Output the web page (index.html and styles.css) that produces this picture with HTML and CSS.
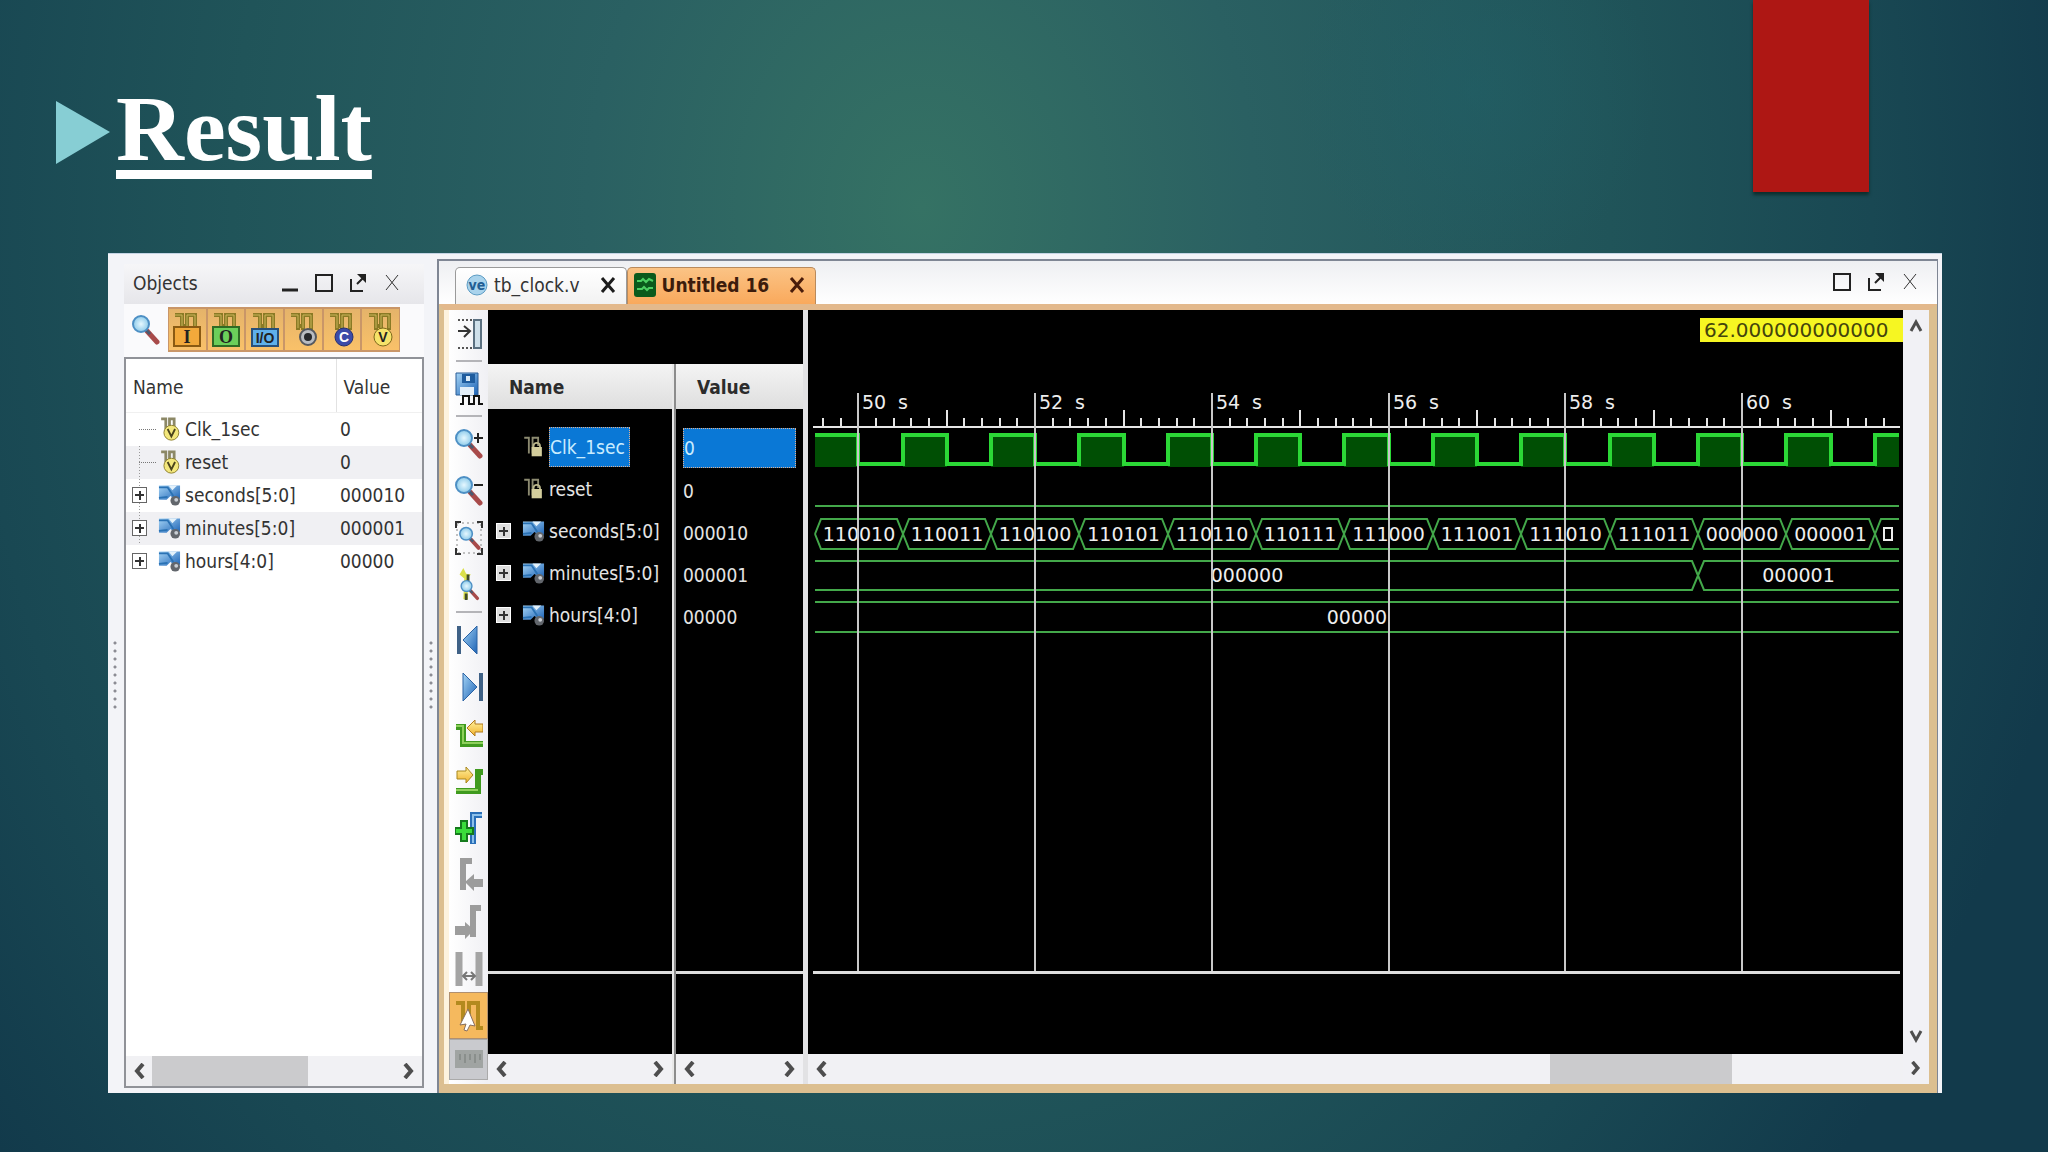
FILE: index.html
```html
<!DOCTYPE html>
<html lang="en">
<head>
	<meta charset="utf-8">
	<title>Result</title>
	<link rel="stylesheet" href="styles.css">
</head>
<body>
	<!-- shared icons -->
	<svg class="defs" width="0" height="0" aria-hidden="true">
		<defs>
			<linearGradient id="blue" x1="0" y1="0" x2="1" y2="1"><stop offset="0" stop-color="#a5d4f5"/><stop offset="1" stop-color="#1c62b5"/></linearGradient>
			<radialGradient id="glass"><stop offset="0" stop-color="#e6f8ff"/><stop offset="1" stop-color="#8ecbea"/></radialGradient>
			<linearGradient id="gold" x1="0" y1="0" x2="0" y2="1"><stop offset="0" stop-color="#fff2a0"/><stop offset="1" stop-color="#f0b12c"/></linearGradient>
		</defs>
		<symbol id="i-lens" viewBox="0 0 28 32">
			<path d="M15 17l10 11" stroke="#a84a4a" stroke-width="5" stroke-linecap="round"/>
			<path d="M14 16l4 4" stroke="#4a5a70" stroke-width="3"/>
			<circle cx="9" cy="10" r="8" fill="url(#glass)" stroke="#4d8fc4" stroke-width="2"/>
		</symbol>
		<symbol id="i-pulse" viewBox="0 0 28 36">
			<path d="M2 3h7v15M9 14h4M14 18V3h8v15" fill="none" stroke="#8a7a25" stroke-width="4"/>
			<path d="M2 3h7v13M14 16V3h8v13" fill="none" stroke="#c9b55a" stroke-width="1"/>
		</symbol>
		<symbol id="i-sigv" viewBox="0 0 24 28">
			<path d="M3 3h5v11M12 12V3h5v9" fill="none" stroke="#8c8866" stroke-width="3"/>
			<circle cx="14" cy="18" r="8" fill="#f3e77c" stroke="#8a7c2c" stroke-width="1"/>
			<path d="M10 14l4 8 4-8" fill="none" stroke="#4a431c" stroke-width="2"/>
		</symbol>
		<symbol id="i-bus" viewBox="0 0 24 24">
			<path d="M1 2h22v14h-6l-4-3-4 4H1z" fill="url(#blue)"/>
			<path d="M11 2l4 5 5-5z" fill="#e4f2fb"/>
			<path d="M1 4h9l6 9M1 15l9-1" fill="none" stroke="#2a72b4" stroke-width="2"/>
			<circle cx="18" cy="18" r="5" fill="#62666c"/>
			<circle cx="19" cy="17" r="2" fill="#c9ced4"/>
		</symbol>
		<symbol id="i-lock" viewBox="0 0 24 28">
			<path d="M2 4h5v17M11 21V4h6v9" fill="none" stroke="#8c8a70" stroke-width="2"/>
			<path d="M12 15v-2a3 3 0 0 1 7 0v2" fill="none" stroke="#b9b58a" stroke-width="2"/>
			<rect x="10" y="14" width="11" height="10" fill="#d3cd9c"/>
		</symbol>
		<symbol id="i-left" viewBox="0 0 12 16"><path d="M10 1L4 8l6 7" fill="none" stroke="#4e4e4e" stroke-width="4"/></symbol>
		<symbol id="i-right" viewBox="0 0 12 16"><path d="M2 1l6 7-6 7" fill="none" stroke="#4e4e4e" stroke-width="4"/></symbol>
		<symbol id="i-max" viewBox="0 0 20 20"><rect x="2" y="2" width="16" height="16" fill="none" stroke="#222" stroke-width="2"/></symbol>
		<symbol id="i-float" viewBox="0 0 20 20"><path d="M3 6v12h12M9 11l6-6" fill="none" stroke="#222" stroke-width="2"/><path d="M9 1h9v9z" fill="#222"/></symbol>
		<symbol id="i-close" viewBox="0 0 20 20"><path d="M4 2l12 15M16 2L4 17" stroke="#333" stroke-width="1"/></symbol>
	</svg>

	<main class="slide">
		<header class="slide-head">
			<div class="title">
				<svg class="bullet" viewBox="0 0 54 63"><path d="M0 0l54 31L0 63z" fill="#87ced4"/></svg>
				<h1>Result</h1>
			</div>
			<div class="ribbon"></div>
		</header>

		<section class="app">
			<div class="splitter"></div>

			<!-- objects panel -->
			<aside class="objects">
				<div class="panel-title">
					<h2>Objects</h2>
					<button aria-label="Minimize"><svg viewBox="0 0 20 20"><path d="M2 17h16" stroke="#222" stroke-width="3"/></svg></button>
					<button aria-label="Maximize"><svg><use href="#i-max"/></svg></button>
					<button aria-label="Float"><svg><use href="#i-float"/></svg></button>
					<button aria-label="Close"><svg><use href="#i-close"/></svg></button>
				</div>
				<div class="filters">
					<button class="find" aria-label="Search"><svg><use href="#i-lens"/></svg></button>
					<button class="on"><svg viewBox="0 0 28 36"><use href="#i-pulse"/><rect x="1" y="15" width="26" height="19" fill="#f2a93b" stroke="#8a5a12" stroke-width="2"/><text x="14" y="31">I</text></svg></button>
					<button class="on"><svg viewBox="0 0 28 36"><use href="#i-pulse"/><rect x="1" y="15" width="26" height="19" fill="#6ccf5a" stroke="#2f6b25" stroke-width="2"/><text x="14" y="31">O</text></svg></button>
					<button class="on"><svg viewBox="0 0 28 36"><use href="#i-pulse"/><rect x="1" y="17" width="26" height="17" fill="#5fb0ea" stroke="#28507a" stroke-width="2"/><text class="small" x="14" y="31">I/O</text></svg></button>
					<button class="on"><svg viewBox="0 0 28 36"><use href="#i-pulse"/><circle cx="19" cy="25" r="8" fill="#b9bcc2" stroke="#55585f" stroke-width="2"/><circle cx="19" cy="25" r="4" fill="#26282c"/></svg></button>
					<button class="on"><svg viewBox="0 0 28 36"><use href="#i-pulse"/><circle cx="16" cy="25" r="9" fill="#3b4aa8" stroke="#262f70"/><text class="small light" x="16" y="30">C</text></svg></button>
					<button class="on"><svg viewBox="0 0 28 36"><use href="#i-pulse"/><circle cx="16" cy="25" r="9" fill="#f6e36a" stroke="#7d6a1c"/><text class="small" x="16" y="30">V</text></svg></button>
				</div>
				<div class="object-list">
					<table>
						<thead>
							<tr><th>Name</th><th>Value</th></tr>
						</thead>
						<tbody>
							<tr><td><div class="cell"><i class="twig"></i><svg class="ico"><use href="#i-sigv"/></svg>Clk_1sec</div></td><td>0</td></tr>
							<tr><td><div class="cell"><i class="twig"></i><svg class="ico"><use href="#i-sigv"/></svg>reset</div></td><td>0</td></tr>
							<tr><td><div class="cell"><button class="plus" aria-label="Expand"></button><svg class="ico"><use href="#i-bus"/></svg>seconds[5:0]</div></td><td>000010</td></tr>
							<tr><td><div class="cell"><button class="plus" aria-label="Expand"></button><svg class="ico"><use href="#i-bus"/></svg>minutes[5:0]</div></td><td>000001</td></tr>
							<tr><td><div class="cell"><button class="plus" aria-label="Expand"></button><svg class="ico"><use href="#i-bus"/></svg>hours[4:0]</div></td><td>00000</td></tr>
						</tbody>
					</table>
					<div class="hscroll">
						<button aria-label="Scroll left"><svg><use href="#i-left"/></svg></button>
						<div class="track"><div class="thumb"></div></div>
						<button aria-label="Scroll right"><svg><use href="#i-right"/></svg></button>
					</div>
				</div>
			</aside>

			<div class="splitter"></div>

			<!-- wave window -->
			<section class="editor">
				<nav class="tabs">
					<button class="tab">
						<svg viewBox="0 0 22 24"><circle cx="11" cy="12" r="10" fill="#a9d3ec" stroke="#5c9cc4"/><text x="11" y="17">ve</text></svg>
						tb_clock.v
						<svg class="x" viewBox="0 0 16 18"><path d="M2 2l12 14M14 2L2 16" stroke="#1c1c1c" stroke-width="3"/></svg>
					</button>
					<button class="tab active">
						<svg viewBox="0 0 22 24"><rect width="22" height="24" rx="3" fill="#0b5a1c"/><path d="M3 8h4l2-2 3 3 3-3 4 2M3 16h5l2-2 3 3 2-2h4" fill="none" stroke="#4ccf62" stroke-width="2"/></svg>
						Untitled 16
						<svg class="x" viewBox="0 0 16 18"><path d="M2 2l12 14M14 2L2 16" stroke="#4a1c0a" stroke-width="3"/></svg>
					</button>
					<div class="win-buttons">
						<button aria-label="Maximize"><svg><use href="#i-max"/></svg></button>
						<button aria-label="Float"><svg><use href="#i-float"/></svg></button>
						<button aria-label="Close"><svg><use href="#i-close"/></svg></button>
					</div>
				</nav>

				<div class="workspace">
					<div class="tools">
						<button aria-label="Dock"><svg viewBox="0 0 28 32"><path d="M3 2h14M3 30h14" stroke="#555" stroke-width="2" stroke-dasharray="2 2"/><path d="M3 13h11M9 8l6 5-6 6" fill="none" stroke="#333" stroke-width="2"/><rect x="19" y="2" width="7" height="28" fill="#cfe0ea" stroke="#5b7080" stroke-width="2"/></svg></button>
						<hr>
						<button aria-label="Save"><svg viewBox="0 0 28 34"><path d="M1 1h22v22H1z" fill="url(#blue)" stroke="#2a5d96"/><rect x="7" y="2" width="13" height="9" fill="#1f5c9e"/><rect x="11" y="4" width="4" height="5" fill="#dcecf8"/><rect x="5" y="15" width="14" height="8" fill="#e3eef8"/><path d="M5 32h3v-8h6v8h5v-8h5v8h4" fill="none" stroke="#111" stroke-width="2"/></svg></button>
						<hr>
						<button aria-label="Zoom in"><svg viewBox="0 0 28 32"><use href="#i-lens" width="28" height="32"/><path d="M19 10h9M23 5v10" stroke="#222" stroke-width="2"/></svg></button>
						<button aria-label="Zoom out"><svg viewBox="0 0 28 32"><use href="#i-lens" width="28" height="32"/><path d="M19 10h9" stroke="#222" stroke-width="2"/></svg></button>
						<button aria-label="Zoom fit"><svg viewBox="0 0 28 34"><rect x="2" y="2" width="24" height="30" fill="none" stroke="#888" stroke-dasharray="2 3"/><use href="#i-lens" x="4" y="5" width="22" height="25"/><path d="M1 7V1h5M22 1h5v6M27 27v6h-5M6 33H1v-6" fill="none" stroke="#333" stroke-width="2"/></svg></button>
						<button aria-label="Zoom to cursor"><svg viewBox="0 0 28 36"><path d="M8 0l3 6 5 1-4 4 1 22H8L9 11 4 7z" fill="#dbe04a"/><path d="M13 7v8M11 27v7" stroke="#3f4a2c" stroke-width="3"/><use href="#i-lens" x="4" y="12" width="22" height="23"/></svg></button>
						<hr>
						<button aria-label="Go to start"><svg viewBox="0 0 28 32"><path d="M22 2v28L8 16z" fill="url(#blue)" stroke="#2a62a4"/><path d="M4 2v28" stroke="#3f6186" stroke-width="4"/></svg></button>
						<button aria-label="Go to end"><svg viewBox="0 0 28 32"><path d="M8 2v28l14-14z" fill="url(#blue)" stroke="#2a62a4"/><path d="M26 2v28" stroke="#3f6186" stroke-width="4"/></svg></button>
						<button aria-label="Previous transition"><svg viewBox="0 0 28 32"><path d="M1 9h7v17h20" fill="none" stroke="#3f9a1f" stroke-width="6"/><path d="M1 8h7v17h20" fill="none" stroke="#8ed05c" stroke-width="2"/><path d="M12 10l8-8v4h8v8h-8v4z" fill="url(#gold)" stroke="#b0791c"/></svg></button>
						<button aria-label="Next transition"><svg viewBox="0 0 28 32"><path d="M1 26h22V7h5" fill="none" stroke="#3f9a1f" stroke-width="6"/><path d="M1 25h22" stroke="#8ed05c" stroke-width="2"/><path d="M18 10l-7-8v4H2v8h9v4z" fill="url(#gold)" stroke="#a8861c"/></svg></button>
						<button aria-label="Add marker"><svg viewBox="0 0 28 34"><path d="M18 33V4h9" fill="none" stroke="#2a6fb8" stroke-width="6"/><path d="M18 32V4h9" fill="none" stroke="#8cc0ea" stroke-width="2"/><path d="M6 10h6v7h6v6h-6v7H6v-7H0v-6h6z" fill="#3bdc3b" stroke="#157a1c" stroke-width="2"/></svg></button>
						<button aria-label="Previous marker" disabled><svg viewBox="0 0 28 34"><path d="M17 3H8v29" fill="none" stroke="#9c9c9c" stroke-width="6"/><path d="M10 24l9-8v5h9v8h-9v4z" fill="#9c9c9c"/></svg></button>
						<button aria-label="Next marker" disabled><svg viewBox="0 0 28 34"><path d="M26 3h-8v29" fill="none" stroke="#9c9c9c" stroke-width="6"/><path d="M19 25l-9-8v4H0v9h10v4z" fill="#9c9c9c"/></svg></button>
						<button aria-label="Swap markers" disabled><svg viewBox="0 0 28 34"><path d="M4 0v34M24 0v34" stroke="#a4a4a4" stroke-width="7"/><path d="M8 24h12M12 20l-4 4 4 4M16 20l4 4-4 4" fill="none" stroke="#777" stroke-width="2"/></svg></button>
						<button class="on" aria-label="Snap to transition"><svg viewBox="0 0 28 34"><path d="M1 4h7v22M14 26V4h9v25h5" fill="none" stroke="#b38a1e" stroke-width="4"/><path d="M13 10l7 17-5-1-3 6-3-1 2-6-6 1z" fill="#fff" stroke="#8a7060"/></svg></button>
						<button class="last" aria-label="Floating ruler" disabled><svg viewBox="0 0 28 20"><rect width="28" height="18" fill="#a0a4a2"/><path d="M5 4v6M10 4v9M15 4v6M20 4v9M25 4v6" stroke="#8a8f8c" stroke-width="2"/></svg></button>
					</div>

					<div class="signals">
						<div class="signal-body">
							<table>
								<thead>
									<tr><th>Name</th><th>Value</th></tr>
								</thead>
								<tbody>
									<tr class="selected"><td><div class="cell"><i class="gap"></i><svg class="ico"><use href="#i-lock"/></svg><span>Clk_1sec</span></div></td><td><span>0</span></td></tr>
									<tr><td><div class="cell"><i class="gap"></i><svg class="ico"><use href="#i-lock"/></svg>reset</div></td><td>0</td></tr>
									<tr><td><div class="cell"><button class="plus" aria-label="Expand"></button><svg class="ico"><use href="#i-bus"/></svg>seconds[5:0]</div></td><td>000010</td></tr>
									<tr><td><div class="cell"><button class="plus" aria-label="Expand"></button><svg class="ico"><use href="#i-bus"/></svg>minutes[5:0]</div></td><td>000001</td></tr>
									<tr><td><div class="cell"><button class="plus" aria-label="Expand"></button><svg class="ico"><use href="#i-bus"/></svg>hours[4:0]</div></td><td>00000</td></tr>
								</tbody>
							</table>
						</div>
						<div class="signal-foot"></div>
						<div class="scrolls">
							<div class="hscroll">
								<button aria-label="Scroll left"><svg><use href="#i-left"/></svg></button>
								<div class="track"></div>
								<button aria-label="Scroll right"><svg><use href="#i-right"/></svg></button>
							</div>
							<div class="hscroll">
								<button aria-label="Scroll left"><svg><use href="#i-left"/></svg></button>
								<div class="track"></div>
								<button aria-label="Scroll right"><svg><use href="#i-right"/></svg></button>
							</div>
						</div>
					</div>

					<div class="wave-pane">
						<div class="wave-view">
							<svg id="wave"></svg>
							<div class="cursor-time">62.000000000000</div>
						</div>
						<div class="signal-foot"></div>
						<div class="hscroll">
							<button aria-label="Scroll left"><svg><use href="#i-left"/></svg></button>
							<div class="track end"><div class="thumb"></div></div>
						</div>
					</div>

					<div class="vscroll">
						<button aria-label="Scroll up"><svg viewBox="0 0 16 14"><path d="M3 12l5-9 5 9" fill="none" stroke="#4e4e4e" stroke-width="3"/></svg></button>
						<div class="vtrack"></div>
						<button aria-label="Scroll down"><svg viewBox="0 0 16 14"><path d="M3 2l5 9 5-9" fill="none" stroke="#4e4e4e" stroke-width="3"/></svg></button>
						<button class="corner" aria-label="Scroll right"><svg><use href="#i-right"/></svg></button>
					</div>
				</div>
			</section>
		</section>
	</main>

	<script src="wave.js"></script>
</body>
</html>
```

FILE: styles.css
```css
* {
	box-sizing: border-box;
}

body {
	margin: 0;
	font-family: "DejaVu Sans Condensed", "DejaVu Sans", sans-serif;
	font-size: 19px;
	line-height: 24px;
	color: #333;
}

button {
	margin: 0;
	padding: 0;
	border: none;
	background: none;
	font: inherit;
	color: inherit;
	display: flex;
	align-items: center;
	justify-content: center;
}

svg {
	display: block;
	flex: none;
}

h1, h2 {
	margin: 0;
	font-weight: normal;
}

.defs {
	position: absolute;
}

/* slide */
.slide {
	min-height: 100vh;
	display: flex;
	flex-direction: column;
	padding-bottom: 59px;
	background:
		radial-gradient(circle at 72% 8%, rgba(32, 96, 104, 0.5), transparent 10%),
		radial-gradient(ellipse 58% 130% at 45% 18%, #357264 0%, #2a6062 28%, #205459 58%, #194853 80%, #123a4b 100%);
}

.slide-head {
	display: flex;
	justify-content: space-between;
	align-items: flex-start;
	padding: 0 179px 0 56px;
	height: 253px;
}

.title {
	display: flex;
	align-items: center;
	gap: 6px;
	padding-top: 74px;
}

.bullet {
	width: 54px;
	height: 63px;
}

h1 {
	font-family: "Liberation Serif", serif;
	font-size: 94px;
	line-height: 108px;
	padding-bottom: 8px;
	font-weight: bold;
	color: #fff;
	text-decoration: underline;
	text-decoration-thickness: 9px;
	text-underline-offset: 10px;
	text-decoration-skip-ink: none;
}

.ribbon {
	width: 116px;
	height: 192px;
	background: #ae1714;
	box-shadow: 0 3px 3px #0d2f2e;
}

/* application window */
.app {
	flex: 1;
	display: flex;
	margin: 0 106px 0 108px;
	padding: 5px 4px 0 0;
	background: #f3f4f8;
	border-top: 1px solid #c4d4e4;
}

.splitter {
	width: 14px;
	flex: none;
	align-self: center;
	height: 74px;
	background: radial-gradient(circle, #8c8c94 1px, transparent 2px) center top / 14px 8px repeat-y;
}

.objects {
	width: 302px;
	flex: none;
	display: flex;
	flex-direction: column;
	padding: 5px 0 5px 2px;
}

.panel-title {
	display: flex;
	align-items: center;
	height: 40px;
	gap: 14px;
	padding: 0 22px 2px 9px;
	background: linear-gradient(#f6f6f8, #e6e6ea);
}

.panel-title h2 {
	flex: 1;
	font-size: 19px;
}

.panel-title svg, .win-buttons svg {
	width: 20px;
	height: 20px;
}

.filters {
	display: flex;
	align-items: center;
	height: 53px;
	padding-bottom: 2px;
	background: #fafafc;
}

.filters .find {
	width: 44px;
}

.filters .find svg {
	width: 28px;
	height: 32px;
}

.filters .on {
	flex: 1;
	height: 45px;
	background: linear-gradient(#e5b36a, #f9c169);
	border: 2px solid #c99668;
	border-width: 2px 1px;
}

.filters .on:last-child {
	margin-right: 24px;
}

.filters .on svg {
	width: 28px;
	height: 36px;
}

.filters text {
	font-family: "Liberation Serif", serif;
	font-size: 18px;
	font-weight: bold;
	text-anchor: middle;
	fill: #222;
}

.filters .small {
	font-family: "Liberation Sans", sans-serif;
	font-size: 14px;
}

.filters .light {
	fill: #fff;
}

.object-list {
	flex: 1;
	display: flex;
	flex-direction: column;
	justify-content: space-between;
	background: #fff;
	border: 2px solid #909298;
}

table {
	width: 100%;
	border-collapse: collapse;
	table-layout: fixed;
}

th, td {
	padding: 0;
	text-align: left;
	white-space: nowrap;
}

.object-list th {
	height: 53px;
	padding: 4px 0 0 7px;
	font-weight: normal;
	border-bottom: 1px solid #f0f0f0;
}

.object-list th:first-child {
	width: 210px;
	border-right: 1px solid #e2e2e2;
}

.object-list td {
	height: 33px;
}

.object-list td:last-child {
	padding-left: 4px;
}

.object-list tbody tr:nth-child(even) {
	background: #f0f0f3;
}

.cell {
	display: flex;
	align-items: center;
	height: 33px;
	padding-left: 6px;
	background: linear-gradient(to bottom, #999 1px, transparent 1px) 7px 0 / 1px 3px repeat-y;
	background-position-x: 13px;
}

.object-list tr:first-child .cell,
.object-list tr:last-child .cell {
	background: none;
}

.ico {
	width: 23px;
	height: 26px;
	margin-right: 4px;
}

.twig {
	width: 17px;
	margin: 0 2px 0 7px;
	border-top: 1px dotted #777;
}

.plus {
	width: 15px;
	height: 16px;
	margin-right: 11px;
	border: 1px solid #666;
	background:
		linear-gradient(#333, #333) center / 9px 2px no-repeat,
		linear-gradient(#333, #333) center / 2px 9px no-repeat,
		#fff;
}

/* scroll bars */
.hscroll {
	display: flex;
	height: 30px;
	background: #f1f1f4;
}

.hscroll button {
	width: 26px;
}

.hscroll svg, .corner svg {
	width: 12px;
	height: 16px;
}

.track {
	flex: 1;
}

.thumb {
	height: 100%;
	width: 64%;
	background: #cbcbcd;
}

.track.end .thumb {
	width: 17%;
	margin-left: 67%;
}

/* editor */
.editor {
	flex: 1;
	display: flex;
	flex-direction: column;
	border: 1px solid #7f8694;
	border-width: 2px 1px 0 2px;
	margin-left: -1px;
}

.tabs {
	display: flex;
	align-items: flex-end;
	height: 43px;
	padding-left: 16px;
	background: linear-gradient(#eeeff2, #fff);
}

.tab {
	height: 37px;
	gap: 6px;
	padding: 0 10px 2px;
	background: linear-gradient(#fff, #f2f2f2);
	border: 1px solid #9a9a9a;
	border-bottom: none;
	border-radius: 5px 5px 0 0;
}

.tab.active {
	background: linear-gradient(#fbc385, #f9a95c);
	border-color: #b98a5c;
	font-weight: bold;
	color: #3c1c0c;
	padding: 0 10px 2px 6px;
}

.tab svg {
	width: 22px;
	height: 24px;
}

.tab .x {
	width: 16px;
	height: 18px;
	margin-left: 14px;
}

.tab text {
	font-size: 14px;
	font-weight: bold;
	text-anchor: middle;
	fill: #215e94;
}

.win-buttons {
	display: flex;
	gap: 14px;
	margin-left: auto;
	padding: 0 17px 12px 0;
}

.workspace {
	flex: 1;
	display: flex;
	border: solid #dcbf90;
	border-width: 6px 8px 9px 5px;
	border-top-color: #e3b98c;
	background: #fdf3df;
	padding-left: 5px;
}

.tools {
	width: 39px;
	flex: none;
	display: flex;
	flex-direction: column;
	padding-bottom: 4px;
	background: linear-gradient(to right, #fff, #f0f0f4);
}

.tools button {
	height: 47px;
}

.tools svg {
	width: 28px;
	height: 34px;
}

.tools hr {
	width: 26px;
	height: 2px;
	margin: 3px auto;
	border: none;
	background: #b4b4b8;
}

.tools .on {
	background: #f5b95e;
	border: 1px solid #b09070;
}

.tools .last {
	flex: 1;
	background: #c9cace;
	border: 1px solid #aaa;
}

.tools .last svg {
	height: 20px;
}

.signals {
	position: relative;
	width: 315px;
	flex: none;
	display: flex;
	flex-direction: column;
	background: #000;
	color: #e4e4e4;
}

/* line between the name and the value column */
.signals::after {
	content: "";
	position: absolute;
	top: 54px;
	bottom: 0;
	left: 184px;
	width: 4px;
	background: linear-gradient(to right, #e8e8e8 50%, #8c8c8c 50%);
}

.signal-body {
	flex: 1;
	padding-top: 54px;
}

.signals th {
	height: 45px;
	padding-left: 21px;
	color: #2c2c2c;
	background: linear-gradient(#f4f4f4, #dedede);
}

.signals th:first-child {
	width: 188px;
}

.signals tbody::before {
	content: "";
	display: table-row;
	height: 16px;
}

.signals td {
	height: 42px;
}

.signals td:last-child {
	padding: 3px 7px 0 7px;
}

.signals .cell {
	background: none;
	height: 42px;
	padding-left: 8px;
}

.signals .plus {
	border-color: #fff;
	background-color: #ddd;
}

.gap {
	width: 26px;
}

.selected span {
	display: block;
	height: 40px;
	line-height: 38px;
	background: #0a78d6;
	border: 1px dotted #e0b090;
	color: #c9ecff;
}

.selected .cell span {
	padding-right: 4px;
}

.signal-foot {
	height: 83px;
	flex: none;
	background: #000;
	border-top: 3px solid #dedede;
}

.scrolls {
	display: flex;
}

.scrolls .hscroll {
	width: 127px;
}

.scrolls .hscroll:first-child {
	width: 188px;
	padding-right: 4px;
}

.wave-pane {
	flex: 1;
	min-width: 0;
	display: flex;
	flex-direction: column;
	background: #000;
	border-left: 5px solid #e2e2e4;
}

.wave-view {
	position: relative;
	flex: 1;
}

#wave {
	position: absolute;
	width: 100%;
	height: 100%;
}

#wave text {
	font-family: "DejaVu Sans", sans-serif;
	font-size: 19px;
	fill: #eee;
}

.wave-pane .signal-foot {
	margin: 0 3px 0 5px;
}

.cursor-time {
	position: absolute;
	top: 8px;
	right: 0;
	width: 203px;
	padding-left: 4px;
	font-family: "DejaVu Sans", sans-serif;
	font-size: 20px;
	background: #f6f622;
	color: #44440c;
}

.vscroll {
	width: 26px;
	flex: none;
	display: flex;
	flex-direction: column;
	background: #f1f1f5;
}

.vscroll button {
	height: 32px;
}

.vscroll svg {
	width: 16px;
	height: 14px;
}

.vtrack {
	flex: 1;
}
```

FILE: wave.js
```js
const svg = document.getElementById('wave');
const NS = 'http://www.w3.org/2000/svg';

// visible time span in seconds
const FROM = 49.43;
const SPAN = 12.39;

const seconds = ['110010', '110011', '110100', '110101', '110110', '110111', '111000',
	'111001', '111010', '111011', '000000', '000001', ''];

function add(name, attrs, text) {
	const el = document.createElementNS(NS, name);
	for (const key in attrs) el.setAttribute(key, attrs[key]);
	if (text) el.textContent = text;
	svg.appendChild(el);
}

function line(d, color, width) {
	add('path', { d: d, fill: 'none', stroke: color, 'stroke-width': width });
}

function label(x, y, text) {
	add('text', { x: x, y: y, 'text-anchor': 'middle' }, text);
}

// one value of a bus, drawn between two transitions
function bus(x0, x1, top, bottom, openLeft, openRight) {
	const mid = (top + bottom) / 2;
	const l = openLeft ? x0 : x0 + 6;
	const r = openRight ? x1 : x1 - 6;
	line(`M${x0} ${openLeft ? top : mid}L${l} ${top}H${r}` + (openRight ? '' : `L${x1} ${mid}`), '#43a84a', 2);
	line(`M${x0} ${openLeft ? bottom : mid}L${l} ${bottom}H${r}` + (openRight ? '' : `L${x1} ${mid}`), '#43a84a', 2);
}

function draw() {
	const width = svg.clientWidth;
	const height = svg.clientHeight;
	const left = 7;
	const right = width - 4;
	const px = t => Math.round((t - FROM) * width / SPAN);
	svg.innerHTML = '';

	// clock
	let d = `M${left} 125`;
	for (let t = 50; t < 62; t++) {
		if (t > 50) add('rect', { x: px(t - 0.5), y: 125, width: px(t) - px(t - 0.5), height: 32, fill: '#004f04' });
		d += `H${px(t)}V154H${px(t + 0.5)}V125`;
	}
	add('rect', { x: left, y: 125, width: px(50) - left, height: 32, fill: '#004f04' });
	add('rect', { x: px(61.5), y: 125, width: right - px(61.5), height: 32, fill: '#004f04' });
	line(d + `H${right}`, '#2bd836', 4);

	// reset
	line(`M${left} 196H${right}`, '#43a84a', 2);

	// seconds
	seconds.forEach((value, i) => {
		const x0 = i ? px(49.5 + i) : left;
		const last = i === seconds.length - 1;
		const x1 = last ? right : px(50.5 + i);
		bus(x0, x1, 209, 239, false, last);
		if (last) add('rect', { x: x0 + 9, y: 218, width: 8, height: 12, fill: 'none', stroke: '#eee', 'stroke-width': 2 });
		else label((x0 + x1) / 2, 231, value);
	});

	// minutes
	bus(left, px(59.5), 251, 280, true, false);
	bus(px(59.5), right, 251, 280, false, true);
	label(px(54.4), 272, '000000');
	label((px(59.5) + right) / 2, 272, '000001');

	// hours
	bus(left, right, 292, 322, true, true);
	label((left + right) / 2, 314, '00000');

	// ruler, i counts tenths of a second
	line(`M5 117H${width - 3}`, '#e6e6e6', 2);
	for (let i = 496; px(i / 10) < right; i += 2) {
		const x = px(i / 10);
		if (i % 20 === 0) {
			line(`M${x} 83V${height}`, '#c8c8c8', 2);
			add('text', { x: x + 4, y: 99 }, String(i / 10));
			add('text', { x: x + 40, y: 99 }, 's');
		} else {
			line(`M${x} ${i % 10 === 0 ? 100 : 108}V117`, '#e6e6e6', 2);
		}
	}
}

draw();
window.addEventListener('resize', draw);
```
